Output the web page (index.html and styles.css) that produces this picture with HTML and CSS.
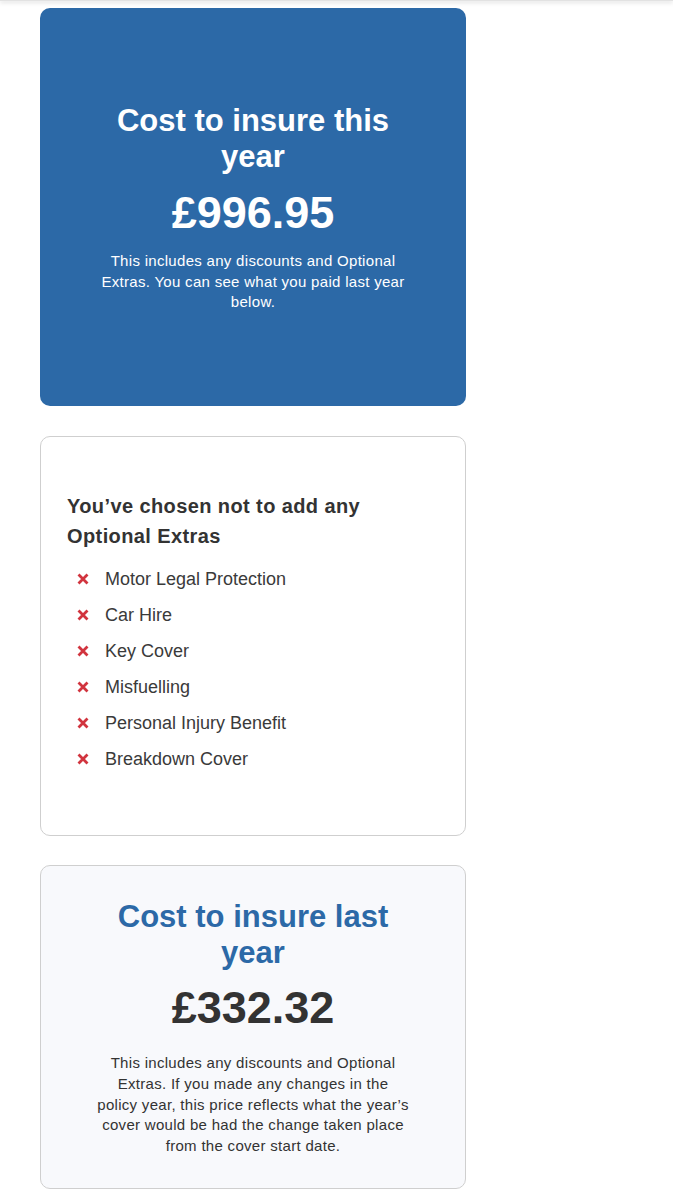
FILE: index.html
```html
<!DOCTYPE html>
<html lang="en">
<head>
    <meta charset="UTF-8">
    <meta name="viewport" content="width=device-width, initial-scale=1.0">
    <title>Renewal Price</title>
    <link rel="stylesheet" href="styles.css">
</head>
<body>
    <div class="top-shadow"></div>

    <div class="page">
        <div class="card card-primary">
            <h1 class="card-title">Cost to insure this year</h1>
            <div class="price">&pound;996.95</div>
            <p class="note">This includes any discounts and Optional Extras. You can see what you paid last year below.</p>
        </div>

        <div class="card card-extras">
            <h2 class="extras-title">You’ve chosen not to add any Optional Extras</h2>
            <ul class="extras-list">
                <li>
                    <svg class="cross" viewBox="0 0 12 12"><path d="M1.5 1.5 L10.5 10.5 M10.5 1.5 L1.5 10.5"/></svg>
                    Motor Legal Protection
                </li>
                <li>
                    <svg class="cross" viewBox="0 0 12 12"><path d="M1.5 1.5 L10.5 10.5 M10.5 1.5 L1.5 10.5"/></svg>
                    Car Hire
                </li>
                <li>
                    <svg class="cross" viewBox="0 0 12 12"><path d="M1.5 1.5 L10.5 10.5 M10.5 1.5 L1.5 10.5"/></svg>
                    Key Cover
                </li>
                <li>
                    <svg class="cross" viewBox="0 0 12 12"><path d="M1.5 1.5 L10.5 10.5 M10.5 1.5 L1.5 10.5"/></svg>
                    Misfuelling
                </li>
                <li>
                    <svg class="cross" viewBox="0 0 12 12"><path d="M1.5 1.5 L10.5 10.5 M10.5 1.5 L1.5 10.5"/></svg>
                    Personal Injury Benefit
                </li>
                <li>
                    <svg class="cross" viewBox="0 0 12 12"><path d="M1.5 1.5 L10.5 10.5 M10.5 1.5 L1.5 10.5"/></svg>
                    Breakdown Cover
                </li>
            </ul>
        </div>

        <div class="card card-last">
            <h1 class="card-title">Cost to insure last year</h1>
            <div class="price">&pound;332.32</div>
            <p class="note">This includes any discounts and Optional Extras. If you made any changes in the policy year, this price reflects what the year’s cover would be had the change taken place from the cover start date.</p>
        </div>
    </div>
</body>
</html>
```

FILE: styles.css
```css
body {
    margin: 0;
    font-family: "Liberation Sans", Arial, sans-serif;
    color: #333;
    background: #fff;
}
.top-shadow {
    height: 1px;
    background: #e2e2e2;
    box-shadow: 0 1px 4px rgba(0, 0, 0, 0.35);
}
.page {
    width: 426px;
    margin-left: 40px;
    padding-top: 7px;
    display: flex;
    flex-direction: column;
    gap: 29px;
}
.card {
    box-sizing: border-box;
    border-radius: 10px;
    text-align: center;
}
.card-title {
    margin: 0;
    font-size: 31px;
    line-height: 36px;
    font-weight: bold;
}
.price {
    font-size: 45px;
    line-height: 54px;
    font-weight: bold;
}
.note {
    margin: 0;
    font-size: 15px;
    letter-spacing: 0.3px;
    line-height: 20.7px;
}

/* this year */
.card-primary {
    background: #2c69a7;
    color: #fff;
    padding: 95px 48px 93px;
}
.card-primary .price {
    margin: 11px 0 11px;
}

/* optional extras */
.card-extras {
    margin-top: 1px;
    border: 1px solid #cfcfcf;
    text-align: left;
    padding: 54px 26px 58px;
}
.extras-title {
    margin: 0;
    font-size: 20px;
    letter-spacing: 0.4px;
    line-height: 30px;
    font-weight: bold;
    color: #333;
}
.extras-list {
    list-style: none;
    margin: 10px 0 0;
    padding: 0;
}
.extras-list li {
    display: flex;
    align-items: center;
    height: 36px;
    font-size: 18px;
    color: #3a3a3a;
}
.cross {
    width: 12px;
    height: 12px;
    margin: 0 16px 0 10px;
    fill: none;
    stroke: #d1343e;
    stroke-width: 2.8;
}

/* last year */
.card-last {
    background: #f8f9fc;
    border: 1px solid #cfcfcf;
    padding: 33px 55px 31px;
}
.card-last .card-title {
    color: #2c69a7;
}
.card-last .price {
    margin: 10px 0 18px;
}
```
